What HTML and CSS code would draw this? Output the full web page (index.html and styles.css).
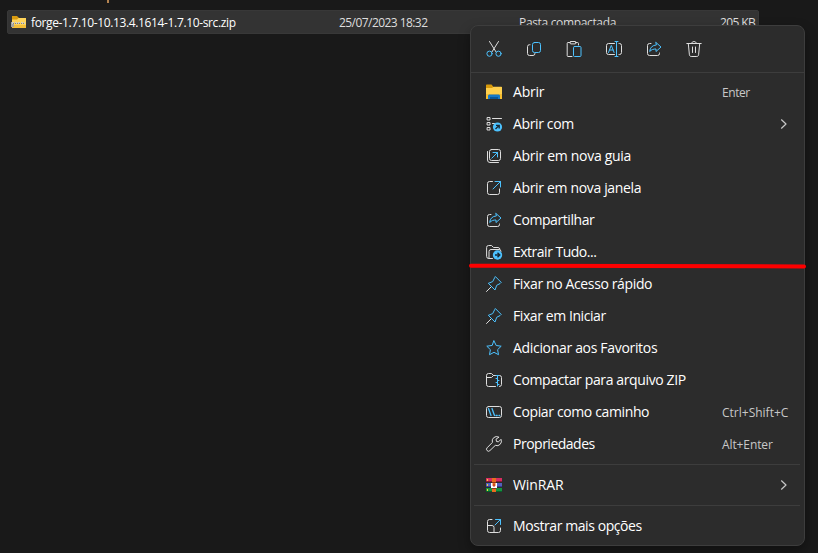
FILE: index.html
```html
<!DOCTYPE html>
<html lang="pt-BR">
<head>
<meta charset="utf-8">
<title>Explorador de Arquivos</title>
<link rel="stylesheet" href="styles.css">
</head>
<body>
<svg width="0" height="0" class="defs">
  <symbol id="share" viewBox="0 0 16 16"><path class="w" d="M5 2.500H3.500a2 2 0 0 0-2 2v8a2 2 0 0 0 2 2h8a2 2 0 0 0 2-2V12"/><path class="b" d="M10 1.500l5 4.500-5 4.500V8C7.500 8 5.500 8.500 3.700 10.500C4 6.500 6.500 4.200 10 4z"/></symbol>
  <symbol id="pin" viewBox="0 0 16 16"><path class="w" d="M.5 15.500L5.500 10.500"/><path class="b" d="M9.600.8l5.600 5.600-1.200 1.200-3.300 1.700-1.700 4.700L2.300 7.300 6.700 5.600 8.500 2z"/></symbol>
  <symbol id="chevron" viewBox="0 0 8 12"><path class="c" d="M1.500 1.800L6 6l-4.500 4.200"/></symbol>
</svg>
<main class="desktop">
  <span class="tick"></span>
  <section class="file">
    <svg class="zip" viewBox="0 0 16 13"><path fill="#d99b10" d="M1 0h5l2 2h7v5H1z"/><path fill="#ffd45a" d="M1 3.500h5L7.500 2H15v10H1z"/><path fill="#f4be39" d="M1 9h14v3H1z"/><path fill="#a5a5a0" d="M0 6h3v5H0z"/><path stroke="#d3d1c3" stroke-width="2" stroke-dasharray="2 1" d="M1 7h13"/><path stroke="#89847a" stroke-dasharray="1 1" d="M2 7.500h12"/></svg>
    <span class="name">forge-1.7.10-10.13.4.1614-1.7.10-src.zip</span>
    <span class="date">25/07/2023 18:32</span>
    <span class="type">Pasta compactada</span>
    <span class="size">205 KB</span>
  </section>

  <nav class="menu">
    <div class="tools">
      <svg viewBox="0 0 16 16"><path class="w" d="M3.500.5l6.600 10.500M12.500.5L5.900 11"/><circle class="b" cx="3.500" cy="12.700" r="2.600"/><circle class="b" cx="12.500" cy="12.700" r="2.600"/></svg>
      <svg viewBox="0 0 16 16"><path class="w" d="M4 3.700H3.500a2 2 0 0 0-2 2v6.800a2 2 0 0 0 2 2H7a2 2 0 0 0 2-2"/><rect class="b" x="6.500" y="1.500" width="8" height="10" rx="2"/></svg>
      <svg viewBox="0 0 16 16"><path class="w" d="M4 1.500H2a.8.8 0 0 0-.8.8v12.400c0 .5.300.8.800.8h4M9.500 1.500h2c.6 0 1 .4 1 1V4"/><rect class="w" x="4" y=".5" width="6" height="2.400" rx="1"/><rect class="b" x="7.500" y="5.500" width="7.500" height="10" rx="1"/></svg>
      <svg viewBox="0 0 16 16"><path class="w" d="M8.500 2.500H2.500a2 2 0 0 0-2 2v7a2 2 0 0 0 2 2h6M13 2.500h.5a2 2 0 0 1 2 2v7a2 2 0 0 1-2 2H13"/><path class="b" d="M10.500.5v15M9 .5h3M9 15.500h3M2.500 11.500l2.700-7h.2l2.700 7M3.500 9h3.600"/></svg>
      <svg><use href="#share"/></svg>
      <svg viewBox="0 0 16 16"><path class="w" d="M.8 2.500h14.400M5.500 2.500C5.500-.2 10.500-.2 10.500 2.500M2.300 2.500l1.100 11.300c.1 1 .8 1.700 1.800 1.700h5.600c1 0 1.700-.7 1.800-1.700L13.700 2.500M6.500 6v5.500M9.500 6v5.500"/></svg>
    </div>
    <ul class="group">
      <li><svg viewBox="0 0 16 16"><path fill="#d89a0b" d="M0 1.500c0-.6.400-1 1-1h4.500L7.500 3H16v5H0z"/><path fill="#ffd04d" d="M0 4h6l1.500-1.200H15c.6 0 1 .4 1 1V14H0z"/><path fill="#f6bd30" d="M0 10h16v5H0z"/><path fill="#1579c9" d="M2 15v-3c0-1 .7-1.500 1.500-1.500h9c.8 0 1.500.5 1.500 1.500v3z"/><path fill="#095699" d="M4 13h8v2H4z"/></svg><span class="label l1">Abrir</span><span class="key k1">Enter</span></li>
      <li><svg viewBox="0 0 16 16"><path class="w" d="M1.500 1.500h2.500v2.500H1.500zM1.500 6.500h2.500V9H1.500zM1.500 11.500h2.500V14H1.500zM6.500 2.500h9M6.500 7.500h2"/><circle cx="11.500" cy="11" r="4.600" fill="#4cc2ff"/><path stroke="#172b37" fill="none" stroke-width="1.400" d="M9.500 13l3.500-3.500M10 9.400h3.200v3.200"/></svg><span class="label l2">Abrir com</span><svg class="chev"><use href="#chevron"/></svg></li>
      <li><svg viewBox="0 0 16 16"><rect class="w" x="3.500" y="1.500" width="11" height="11" rx="2"/><path class="w" d="M1.500 3.500v8.500a2.500 2.500 0 0 0 2.500 2.500h8.500"/><path class="b" d="M5.800 10.200l5.700-5.700M7 4.500h4.500V9"/></svg><span class="label l3">Abrir em nova guia</span></li>
      <li><svg viewBox="0 0 16 16"><path class="w" d="M6.500 1.500h-3a2 2 0 0 0-2 2v9a2 2 0 0 0 2 2h8a2 2 0 0 0 2-2V9"/><path class="b" d="M7 9l7.500-7.500M9 1.500h5.500V7"/></svg><span class="label l4">Abrir em nova janela</span></li>
      <li><svg><use href="#share"/></svg><span class="label l5">Compartilhar</span></li>
      <li><svg viewBox="0 0 16 16"><path class="w" d="M6.500 14.500H3A2.200 2.200 0 0 1 .6 12.300V3.500a2 2 0 0 1 2-2h3L7.500 3.500H12a2 2 0 0 1 2 1.800M3 14V7.500a2 2 0 0 1 2-2h8a2 2 0 0 1 2 2"/><circle cx="11.500" cy="11" r="4.700" fill="#4cc2ff"/><path stroke="#172b37" fill="none" stroke-width="1.400" d="M9 11h4.700M11.500 8.700l2.300 2.300-2.300 2.300"/></svg><span class="label l6">Extrair Tudo...</span></li>
      <li><svg><use href="#pin"/></svg><span class="label l7">Fixar no Acesso rápido</span></li>
      <li><svg><use href="#pin"/></svg><span class="label l8">Fixar em Iniciar</span></li>
      <li><svg viewBox="0 0 16 16"><path class="b" d="M8 .9l2.200 4.600 5 .7-3.600 3.500.9 5L8 12.300l-4.500 2.400.9-5L.8 6.200l5-.7z"/></svg><span class="label l9">Adicionar aos Favoritos</span></li>
      <li><svg viewBox="0 0 16 16"><path class="w" d="M9.500 14.500h-7a2 2 0 0 1-2-2v-9a2 2 0 0 1 2-2h3l2 2h6a2 2 0 0 1 2 2v7a2 2 0 0 1-2 2M.5 5.500h5l2-2"/><path class="b" d="M10 3.500h3M11.500 4v10M10 6.500h1.500M11.500 8.500H13M10 10.500h1.500M11.500 12.500H13"/></svg><span class="label l10">Compactar para arquivo ZIP</span></li>
      <li><svg viewBox="0 0 16 16"><rect class="w" x=".5" y="2.500" width="15" height="11" rx="2"/><path class="b path" d="M2.500 4.500l2.500 7M6 4.500l2.500 7M10 11.500h1.200M13 11.500h.7"/></svg><span class="label l11">Copiar como caminho</span><span class="key k2">Ctrl+Shift+C</span></li>
      <li><svg viewBox="0 0 16 16"><path class="w" d="M12.700 1A4.500 4.500 0 0 0 6.400 6.400L1.100 11.800a1.900 1.900 0 0 0 2.800 2.800l5.400-5.200A4.500 4.500 0 0 0 15 3.300l-2.500 2.500-2-.3-.4-2z"/></svg><span class="label l12">Propriedades</span><span class="key k3">Alt+Enter</span></li>
    </ul>
    <ul class="group">
      <li><svg viewBox="0 0 16 16"><path fill="#d82d60" d="M0 1h16v4H0z"/><path fill="#5360bd" d="M0 6h16v4H0z"/><path fill="#169340" d="M0 11h16v4H0z"/><path fill="#8b1938" d="M0 4h16v1H0z"/><path fill="#343e91" d="M0 9h16v1H0z"/><path fill="#07602a" d="M0 14h16v1H0z"/><path stroke="#f4cf37" d="M1.500 2v2M1.500 7v2M1.500 12v2"/><path fill="#e96c1f" d="M6 1h4v14H6z"/><path fill="#8d361c" d="M6 5h4v1H6zM6 11h4v1H6z"/><path fill="#fff" d="M5 6h1.500v3h3V6H11v5H5z"/><path fill="#b52c21" d="M7.500 7h1v3h-1z"/></svg><span class="label l13">WinRAR</span><svg class="chev"><use href="#chevron"/></svg></li>
    </ul>
    <ul class="group">
      <li><svg viewBox="0 0 16 16"><path class="w" d="M6 1.500H3.500a2 2 0 0 0-2 2v9a2 2 0 0 0 2 2h9a2 2 0 0 0 2-2V10M1.500 7.500H6a2 2 0 0 1 2 2v5"/><path class="b" d="M9 7l5.500-5.500M9.500 1.500h5V6.500"/></svg><span class="label l14">Mostrar mais opções</span></li>
    </ul>
  </nav>
  <svg class="mark" viewBox="0 0 337 6"><path d="M2 2.700C90 2.400 170 3.300 335 3.400"/></svg>
</main>
</body>
</html>
```
FILE: styles.css
```css
* { box-sizing: border-box; }
body { margin: 0; background: #191919; font-family: "Open Sans", "Noto Sans", sans-serif; }
svg { flex: none; overflow: visible; }
.defs { position: absolute; }
.desktop { position: relative; width: 818px; height: 553px; overflow: hidden; padding: 10px 0 0 7px; }
.tick { position: absolute; left: 107px; top: 0; width: 2px; height: 3px; background: #b38350; }
.file {
  display: grid; grid-template-columns: 19px 308px 180px 201px 38px; align-items: center;
  width: 752px; height: 24px; padding: 1px 0 0 4px; background: #333; border: 1px solid #383838;
  border-radius: 2px; color: #dedede; font-size: 12px; line-height: 16px; white-space: nowrap;
}
.zip { width: 16px; height: 13px; margin-left: -1px; }
.file .name { color: #fff; letter-spacing: -.36px; }
.file .date { letter-spacing: -.56px; }
.file .type { letter-spacing: -.34px; }
.file .size { letter-spacing: -.6px; }
.menu {
  position: absolute; left: 470px; top: 25px; width: 335px; height: 521px;
  background: #2c2c2c; border: 1px solid #3d3d3d; border-radius: 8px;
  box-shadow: 0 5px 12px rgba(0, 0, 0, .35);
}
.tools {
  display: flex; align-items: center; gap: 24px; height: 47px;
  padding-left: 15px; border-bottom: 1px solid #3d3d3d;
}
.tools svg, .group svg { width: 16px; height: 16px; }
.group { list-style: none; margin: 0 4px 0 3px; padding: 3px 0 4px; }
.group + .group { border-top: 1px solid #3d3d3d; padding-top: 4px; }
.group li {
  display: grid; grid-template-columns: 27px 209px 1fr; align-items: center;
  height: 32px; padding-left: 12px; color: #fff; font-size: 14px; line-height: 20px; white-space: nowrap;
}
.label { letter-spacing: -.37px; }
.l1 { letter-spacing: -.2px; }
.l3 { letter-spacing: -.3px; }
.l4 { letter-spacing: -.34px; }
.l5, .l8, .l14 { letter-spacing: -.42px; }
.l6, .l12 { letter-spacing: -.5px; }
.l9 { letter-spacing: -.32px; }
.l13 { letter-spacing: -.1px; }
.key { color: #c8c8c8; font-size: 12px; padding-top: 2px; }
.k1 { letter-spacing: -.45px; }
.k3 { letter-spacing: -.1px; }
.group .chev { width: 8px; height: 12px; margin-left: 58px; }
.w, .b, .c { fill: none; stroke-width: 1; stroke-linecap: round; stroke-linejoin: round; }
.w { stroke: #dedede; }
.b { stroke: #4cc2ff; }
.path { stroke-width: 1.3; }
.c { stroke: #c8c8c8; stroke-width: 1.2; }
.mark { position: absolute; left: 469px; top: 263px; width: 337px; height: 6px; }
.mark path { fill: none; stroke: #fe0000; stroke-width: 4; stroke-linecap: round; }
```
